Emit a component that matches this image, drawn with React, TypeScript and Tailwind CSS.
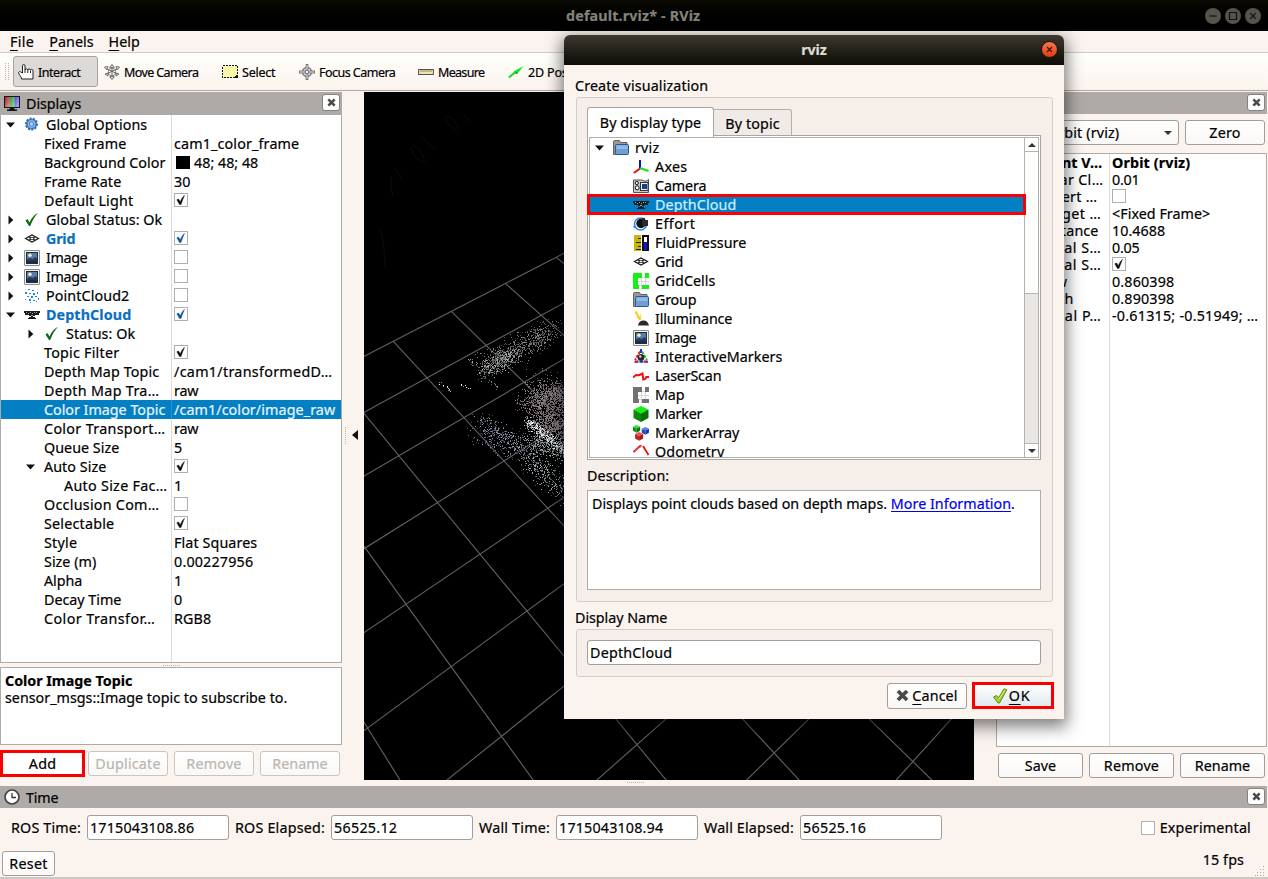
import React, { useLayoutEffect, useRef } from "react";

/* ---------- text ---------- */

type TextProps = { t: string; w?: number; c?: string; hot?: boolean };

// Tracks a label so that its ink fills roughly `w` pixels.
function T({ t, w, c = "", hot }: TextProps) {
  const ref = useRef<HTMLSpanElement>(null);
  useLayoutEffect(() => {
    const el = ref.current;
    if (!el || !w) return;
    el.style.letterSpacing = "0px";
    const natural = el.getBoundingClientRect().width;
    el.style.letterSpacing = (w - 0.7 - natural) / t.length + "px";
  }, [t, w]);
  return (
    <span ref={ref} className={"inline-block shrink-0 whitespace-pre " + c}>
      {hot ? <span className="underline decoration-1 underline-offset-[3px]">{t[0]}</span> : t[0]}
      {t.slice(1)}
    </span>
  );
}

/* ---------- icons ---------- */

const Svg = ({ children, crisp, c = "" }: { children: React.ReactNode; crisp?: boolean; c?: string }) => (
  <svg width="16" height="16" viewBox="0 0 16 16" className={"shrink-0 " + c} shapeRendering={crisp ? "crispEdges" : "auto"}>
    {children}
  </svg>
);

const GridIcon = () => (
  <Svg>
    <path d="M1.500 7.500 8 4l6.500 3.500L8 11Z M4.700 5.700l6.600 3.600M11.300 5.700 4.700 9.300" fill="none" stroke="#1a1a1a" strokeWidth="1.200" />
    <path d="M8 6.200 10.300 7.500 8 8.800 5.700 7.500Z" fill="#fff" stroke="#222" strokeWidth=".7" />
  </Svg>
);

const DepthIcon = () => (
  <Svg crisp>
    <path d="M0 4h16v2h-1v2h-4v1H9v1h2v1h1v1H4v-1h1v-1h2V9H5V8H1V6H0Z" fill="#1b1b1b" />
    <path d="M2 5h1v1H2zM4 6h1v1H4zM6 5h1v1H6zM8 6h1v1H8zM10 5h1v1h-1zM12 5h1v1h-1zM7 8h2v1H7z" fill="#a5a5a5" />
  </Svg>
);

const ImageIcon = () => (
  <Svg>
    <rect x=".5" y=".5" width="15" height="15" rx=".5" fill="#f4f4f4" stroke="#8c8c86" />
    <rect x="2" y="2" width="12" height="12" fill="#1d2b45" />
    <rect x="3" y="3" width="10" height="6.500" fill="#5b7da5" />
    <circle cx="6" cy="5.300" r="1.700" fill="#f6f1c4" />
    <path d="M3 9.500l3-1.500 3 1 2-2 2 1.500V11H3Z" fill="#26395c" />
  </Svg>
);

const FolderIcon = () => (
  <Svg>
    <path d="M.5 2q0-1.500 1.500-1.500h4.500l1 2h6.500v12H.5Z" fill="#9a9a96" stroke="#62625f" />
    <rect x="2.500" y="4.500" width="13" height="10" rx="1" fill="#6f9fd4" stroke="#2b568f" />
    <rect x="3.500" y="5.500" width="11" height="3.500" fill="#94bbe4" />
  </Svg>
);

const GearIcon = () => (
  <Svg>
    <circle cx="7.500" cy="7" r="5.600" fill="#4f8fd0" stroke="#2d69ad" strokeWidth="1.800" strokeDasharray="2 1.400" />
    <circle cx="7.500" cy="7" r="4.400" fill="#8dbbea" stroke="#2f6fb5" strokeWidth=".8" />
    <circle cx="7.500" cy="7" r="2.200" fill="#b7d5f3" stroke="#2f6fb5" strokeWidth=".8" />
  </Svg>
);

const OkIcon = () => (
  <Svg>
    <path d="M1.500 8.500 3.500 7l2 3.500C7.500 6 10 3 14 .8 10.500 5 8.300 8.500 6.200 14H5Z" fill="#0f6a17" />
  </Svg>
);

const PointsIcon = () => (
  <Svg crisp>
    <path
      d="M4 1h2v1H4zM8 2h2v1H8zM1 4h2v2H1zM5 5h2v1H5zM9 5h2v2H9zM13 4h1v2h-1zM3 8h2v1H3zM7 8h2v2H7zM11 8h2v1h-2zM14 10h1v2h-1zM1 11h1v1H1zM5 11h2v2H5zM9 12h2v1H9zM6 14h1v1H6zM12 13h1v1h-1z"
      fill="#1f86f0"
    />
  </Svg>
);

const AxesIcon = () => (
  <Svg>
    <path d="M7 9.500V1" stroke="#0a0adf" strokeWidth="2" />
    <path d="M7 9.500 .8 14" stroke="#e01010" strokeWidth="2" />
    <path d="M7 9l8.500 3" stroke="#10e020" strokeWidth="2" />
  </Svg>
);

const CameraIcon = () => (
  <Svg>
    <path d="M.5 2h9l1.500 1h3l1-1.500h.5V14.500H.5Z" fill="#c9c9c5" stroke="#55554f" />
    <rect x="7.500" y="4.500" width="7.500" height="8" fill="#eee" stroke="#333" />
    <rect x="9" y="6" width="5" height="5" fill="#16408d" />
    <circle cx="3.800" cy="5" r="1.600" fill="#fff" stroke="#111" />
    <circle cx="4.200" cy="9.800" r="2" fill="#fff" stroke="#111" />
  </Svg>
);

const EffortIcon = () => (
  <Svg>
    <circle cx="7.500" cy="8" r="6" fill="none" stroke="#2b8be0" strokeWidth="1.600" />
    <circle cx="8" cy="7.500" r="4.700" fill="#111" />
    <path d="M9 2h3v2h3v6h-4l-2-1Z" fill="#2a2a2a" />
    <path d="M0 10l3 .5-2 2Z" fill="#2b8be0" />
  </Svg>
);

const FluidIcon = () => (
  <Svg crisp>
    <rect x="1" y="0" width="7" height="16" fill="#c7b800" />
    <path d="M5 3h3v1H5zM3 7h5v1H3zM5 11h3v1H5zM3 14h5v1H3z" fill="#222" />
    <rect x="9" y="0" width="7" height="16" fill="#111" />
    <path d="M11 3h3v12h-3z" fill="#1414d8" />
    <path d="M11 2h3v5h-3z" fill="#fff" />
  </Svg>
);

const Cells = ({ on }: { on: string }) => (
  <Svg crisp>
    <path d="M4 0h1v16H4zM8 0h1v16H8zM12 0h1v16h-1zM0 4h16v1H0zM0 8h16v1H0zM0 12h16v1H0z" fill="#d8d8d8" />
    <path d="M0 0h9v5H5v7h1v4H0ZM12 0h4v5h-4ZM9 12h7v4H9Z" fill={on} />
  </Svg>
);

const IllumIcon = () => (
  <Svg>
    <path d="M2.500.5 7.500 9" stroke="#f0cf10" strokeWidth="2" />
    <path d="M3 6l3 2M8 3l-.5 4" stroke="#f0cf10" strokeWidth=".7" />
    <path d="M5 14.500c.5-3.500 2.500-5 5.500-5s4.500 1.500 5.500 5Z" fill="#2b2b2b" />
  </Svg>
);

const InteractiveIcon = () => (
  <Svg>
    <path d="M7 2.500 2 11" stroke="#e32020" strokeWidth="2" strokeDasharray="3 1" />
    <path d="M9 2.500 14 11" stroke="#20c030" strokeWidth="2" strokeDasharray="3 1" />
    <path d="M1.500 12.800h13.500" stroke="#2030e8" strokeWidth="2" strokeDasharray="4 1" />
    <path d="M8 0v4" stroke="#2030e8" strokeWidth="2" />
    <path d="M2 12.500h3M11 12.500h3" stroke="#e32020" strokeWidth="2" />
    <circle cx="8" cy="8.500" r="3.400" fill="#2a2a2a" />
    <circle cx="7.300" cy="7.500" r="1.200" fill="#d5d5d5" />
  </Svg>
);

const LaserIcon = () => (
  <Svg>
    <path d="M0 9.500 3 7l3 .2L9.500 5.500l.8 6 2-.5 1-2H16" fill="none" stroke="#f01010" strokeWidth="2" />
  </Svg>
);

const cube = (x: number, y: number, s: number, a: string, b: string, d: string) => (
  <g transform={`translate(${x} ${y}) scale(${s})`}>
    <path d="M8 0l7.500 3.500L8 7.500.5 3.500Z" fill={a} />
    <path d="M.5 3.500 8 7.500V16L.5 12Z" fill={b} />
    <path d="M15.500 3.500 8 7.500V16l7.500-4Z" fill={d} />
  </g>
);

const MarkerIcon = () => <Svg>{cube(0, 0, 1, "#15f015", "#0a8a0a", "#067006")}</Svg>;
const MarkerArrayIcon = () => (
  <Svg>
    {cube(-0.3, 0, 0.48, "#30e030", "#129012", "#0c780c")}
    {cube(8.5, 2, 0.48, "#5580ee", "#2448c4", "#1838a0")}
    {cube(1.8, 7, 0.54, "#ee5050", "#c02424", "#a01a1a")}
  </Svg>
);

const OdomIcon = () => (
  <Svg>
    <path d="M.5 8 7 2l1.500-.5M10 2l5.500 9" fill="none" stroke="#e51515" strokeWidth="1.800" />
    <path d="M2 7l6-4" stroke="#f09090" strokeWidth=".8" />
  </Svg>
);

const MonitorIcon = () => (
  <Svg>
    <defs>
      <linearGradient id="scrR" x1="0" y1="0" x2="1" y2="1">
        <stop offset="0" stopColor="#a02a2a" />
        <stop offset="1" stopColor="#e0a0a0" />
      </linearGradient>
      <linearGradient id="scrG" x1="0" y1="0" x2="1" y2="1">
        <stop offset="0" stopColor="#2c9a40" />
        <stop offset="1" stopColor="#a0e0a0" />
      </linearGradient>
      <linearGradient id="scrB" x1="0" y1="0" x2="1" y2="1">
        <stop offset="0" stopColor="#5050d8" />
        <stop offset="1" stopColor="#b8b8fa" />
      </linearGradient>
    </defs>
    <rect x="1" y="1" width="5" height="10" fill="url(#scrR)" />
    <rect x="6" y="1" width="4.500" height="10" fill="url(#scrG)" />
    <rect x="10.500" y="1" width="5" height="10" fill="url(#scrB)" />
    <rect x=".5" y=".5" width="15" height="11" fill="none" stroke="#161616" />
    <path d="M6 12h4l1 1.500h2V15H3v-1.500h2Z" fill="#161616" />
  </Svg>
);

const ClockIcon = () => (
  <Svg>
    <circle cx="8" cy="8" r="7" fill="#fff" stroke="#444" strokeWidth="1.700" />
    <path d="M8 4v4.500h4" fill="none" stroke="#333" strokeWidth="1.300" />
  </Svg>
);

const HandIcon = () => (
  <Svg>
    <path
      d="M4.500 9V1.800q0-1.300 1.200-1.300T7 1.800V6q.3-1.200 1.400-1.200T9.800 6q.2-1 1.300-1t1.300 1.200q.2-.8 1.300-.8t1.300 1.200V15H3.500q0-2-1.500-3.500Q.5 10 .6 8.500 1.300 6.800 2.700 8Z"
      fill="#fff"
      stroke="#222"
    />
    <path d="M7 6v3M9.800 6v3M12.500 6.500V9" stroke="#222" strokeWidth="1" />
  </Svg>
);

const MoveIcon = () => (
  <Svg>
    <circle cx="8" cy="8" r="3.800" fill="none" stroke="#888" />
    <path d="M8 3v10M2.500 4.500 13.500 10M13.500 4.500 2.500 10" stroke="#666" strokeWidth="1" />
    <path d="M8 .4l2.300 3H5.700ZM8 15.600l2.300-3H5.700ZM.5 3l3.500-.5L2.800 6ZM15.500 3 12 2.500 13.200 6Z" fill="#e2e2e2" stroke="#555" strokeWidth=".8" />
    <path d="M1 10l3-1v3ZM15 10l-3-1v3Z" fill="#ddd" stroke="#555" strokeWidth=".8" />
  </Svg>
);

const FocusIcon = () => (
  <Svg>
    <circle cx="8" cy="8" r="4.500" fill="none" stroke="#8c8c8c" strokeWidth="1.800" />
    <path d="M8 0v16M0 8h16" stroke="#777" strokeWidth="2.800" />
    <path d="M8 1v14M1 8h14" stroke="#e6e6e6" strokeWidth="1" />
    <circle cx="8" cy="8" r="1.800" fill="#eee" stroke="#777" />
  </Svg>
);

const SelectIcon = () => (
  <Svg crisp>
    <rect x=".5" y="1.500" width="15" height="12" fill="#fbf7a8" stroke="#111" strokeDasharray="2 1" />
    <path d="M15 10v4h-4Z" fill="#111" />
  </Svg>
);

const RulerIcon = () => (
  <Svg>
    <rect x=".6" y="5.500" width="14.800" height="5" fill="#efe5a5" stroke="#555" />
    <path d="M3 6v2M5 6v2M7 6v2M9 6v2M11 6v2M13 6v2" stroke="#777" strokeWidth=".8" />
  </Svg>
);

const ArrowIcon = () => (
  <Svg>
    <path d="M.8 13.500 7 8.500" stroke="#14e02c" strokeWidth="2.200" />
    <path d="M15.500 2 5.500 7.500l3.500 2.700Z" fill="#12e428" />
    <path d="M6 9l2.500.8L9.500 8Z" fill="#0a8a18" />
  </Svg>
);

const Cross = ({ s = 9, c = "#4a4a48" }: { s?: number; c?: string }) => (
  <svg width={s} height={s} viewBox="0 0 8 8" className="shrink-0">
    <path d="M1.200 1.200 6.800 6.800M6.800 1.200 1.200 6.800" stroke={c} strokeWidth="2.300" />
  </svg>
);

const ApplyIcon = () => (
  <Svg>
    <path d="M1.500 9 4.500 7.500 6.500 10 12 .8l2.800 1L7.500 15H6Z" fill="#a4cf2c" stroke="#5f8d0e" strokeWidth="1" />
    <path d="M7 11 12.800 2" stroke="#d6ee80" strokeWidth="1" />
  </Svg>
);

/* ---------- small controls ---------- */

const Check = ({ on, blue, c = "" }: { on?: boolean; blue?: boolean; c?: string }) => (
  <span className={"flex h-[14px] w-[14px] shrink-0 items-center justify-center border border-[#b0adaa] bg-white " + c}>
    {on && (
      <svg width="10" height="10" viewBox="0 0 10 10">
        <path d="M.8 4.800 2.600 4l1.600 2.700Q5.500 3 8.500.3 6.800 4.500 5 9.500H3.500Z" fill={blue ? "#0c539c" : "#0a0a0a"} stroke={blue ? "#0c539c" : "#0a0a0a"} strokeWidth=".4" />
      </svg>
    )}
  </span>
);

const Tri = ({ open }: { open?: boolean }) => (
  <svg width="9" height="10" viewBox="0 0 9 10" className="shrink-0">
    <path d={open ? "M0 2.500h9L4.500 7.500Z" : "M2.500 .5v9L7.300 5Z"} fill="#111" />
  </svg>
);

const Btn = ({ children, c = "", off }: { children: React.ReactNode; c?: string; off?: boolean }) => (
  <button
    className={
      "flex shrink-0 items-center justify-center rounded-[3px] border bg-linear-to-b from-white to-[#faf8f6] " +
      (off ? "border-[#c9c5c1] text-[#b9b6b3] " : "border-[#a19d99] text-black ") +
      c
    }
  >
    {children}
  </button>
);

const DockHeader = ({ icon, title, w, c = "" }: { icon?: React.ReactNode; title?: string; w?: number; c?: string }) => (
  <div className={"flex shrink-0 items-center bg-[#aeaaa7] pr-[2px] pl-1 " + c}>
    {icon}
    {title && <T t={title} w={w} c="ml-[6px]" />}
    <span className="mb-[2px] ml-auto flex h-[17px] w-[18px] items-center justify-center rounded-[3px] border border-[#85817e] bg-white">
      <Cross />
    </span>
  </div>
);

const Field = ({ t, w, c = "" }: { t: string; w: number; c?: string }) => (
  <div className={"flex h-[25px] shrink-0 items-center rounded-[3px] border border-[#a19d99] bg-white " + c}>
    <T t={t} w={w} />
  </div>
);

/* ---------- displays tree ---------- */

type Row = { l: string; w: number; d: number; a?: "o" | "c"; i?: React.ReactNode; v?: string; vw?: number; k?: "on" | "off" | "blue"; b?: boolean; sel?: boolean; sw?: boolean };

const rows: Row[] = [
  { l: "Global Options", w: 102, d: 0, a: "o", i: <GearIcon /> },
  { l: "Fixed Frame", w: 83, d: 0, v: "cam1_color_frame", vw: 126 },
  { l: "Background Color", w: 122, d: 0, v: "48; 48; 48", vw: 65, sw: true },
  { l: "Frame Rate", w: 78, d: 0, v: "30", vw: 17 },
  { l: "Default Light", w: 90, d: 0, k: "on" },
  { l: "Global Status: Ok", w: 117, d: 0, a: "c", i: <OkIcon /> },
  { l: "Grid", w: 30, d: 0, a: "c", i: <GridIcon />, k: "blue", b: true },
  { l: "Image", w: 42, d: 0, a: "c", i: <ImageIcon />, k: "off" },
  { l: "Image", w: 42, d: 0, a: "c", i: <ImageIcon />, k: "off" },
  { l: "PointCloud2", w: 84, d: 0, a: "c", i: <PointsIcon />, k: "off" },
  { l: "DepthCloud", w: 86, d: 0, a: "o", i: <DepthIcon />, k: "blue", b: true },
  { l: "Status: Ok", w: 70, d: 1, a: "c", i: <OkIcon /> },
  { l: "Topic Filter", w: 76, d: 0, k: "on" },
  { l: "Depth Map Topic", w: 116, d: 0, v: "/cam1/transformedD…", vw: 159 },
  { l: "Depth Map Tra…", w: 116, d: 0, v: "raw", vw: 25 },
  { l: "Color Image Topic", w: 122, d: 0, v: "/cam1/color/image_raw", vw: 162, sel: true },
  { l: "Color Transport…", w: 122, d: 0, v: "raw", vw: 25 },
  { l: "Queue Size", w: 76, d: 0, v: "5", vw: 9 },
  { l: "Auto Size", w: 63, d: 1, a: "o", k: "on" },
  { l: "Auto Size Fac…", w: 104, d: 1, v: "1", vw: 9 },
  { l: "Occlusion Com…", w: 116, d: 0, k: "off" },
  { l: "Selectable", w: 71, d: 0, k: "on" },
  { l: "Style", w: 34, d: 0, v: "Flat Squares", vw: 84 },
  { l: "Size (m)", w: 53, d: 0, v: "0.00227956", vw: 80 },
  { l: "Alpha", w: 39, d: 0, v: "1", vw: 9 },
  { l: "Decay Time", w: 78, d: 0, v: "0", vw: 9 },
  { l: "Color Transfor…", w: 112, d: 0, v: "RGB8", vw: 38 },
];

const TreeRow = ({ r }: { r: Row }) => (
  <div className={"flex h-[19px] shrink-0 items-center " + (r.sel ? "bg-[#0380c4] text-[#e9f4fb]" : "")}>
    <div className={"flex h-full w-[171px] shrink-0 items-center overflow-hidden border-r " + (r.sel ? "border-[#2b93cd]" : "border-[#dedcda]")}>
      <span className={"flex shrink-0 items-center " + (r.d ? "pl-[25px]" : "pl-[5px]")}>
        {r.a ? <Tri open={r.a === "o"} /> : <span className="w-[9px]" />}
      </span>
      {r.i ? <span className="mr-[6px] ml-[9px] flex">{r.i}</span> : <span className={r.a ? "w-[9px]" : "w-[29px]"} />}
      <T t={r.l} w={r.w} c={r.b ? "font-bold text-[#0a6fc2]" : ""} />
    </div>
    <div className="flex items-center pl-[2px]">
      {r.sw && <span className="mr-1 ml-[2px] h-[13px] w-[14px] bg-black" />}
      {r.v && <T t={r.v} w={r.vw} />}
      {r.k && <Check on={r.k !== "off"} blue={r.k === "blue"} c="mb-[2px]" />}
    </div>
  </div>
);

/* ---------- view properties ---------- */

const views: { l: string; w: number; v?: string; vw?: number; k?: "on" | "off"; b?: boolean }[] = [
  { l: "Current V…", w: 81, v: "Orbit (rviz)", vw: 79, b: true },
  { l: "Near Cl…", w: 64, v: "0.01", vw: 28 },
  { l: "Invert …", w: 58, k: "off" },
  { l: "Target …", w: 62, v: "<Fixed Frame>", vw: 99 },
  { l: "Distance", w: 59, v: "10.4688", vw: 54 },
  { l: "Focal S…", w: 62, v: "0.05", vw: 28 },
  { l: "Focal S…", w: 62, k: "on" },
  { l: "Yaw", w: 28, v: "0.860398", vw: 63 },
  { l: "Pitch", w: 34, v: "0.890398", vw: 63 },
  { l: "Focal P…", w: 62, v: "-0.61315; -0.51949; …", vw: 147 },
];

/* ---------- 3D viewport ---------- */

const node = (i: number, j: number) => {
  const w = 1 + 0.037 * i - 0.0412 * j;
  return [(331 + 76.85 * i + 17.47 * j) / w - 364, (373.4 - 19.5 * i + 22.35 * j) / w - 92];
};

const gridPath = (() => {
  let d = "";
  const seg = (a: number[], b: number[]) => (d += `M${a[0].toFixed(1)} ${a[1].toFixed(1)}L${b[0].toFixed(1)} ${b[1].toFixed(1)}`);
  for (let j = 0; j <= 10; j++) seg(node(-5, j), node(5, j));
  for (let i = -5; i <= 5; i++) seg(node(i, 0), node(i, 10));
  return d;
})();

// [x1, y1, x2, y2, spread, count, palette index]
const clusters: number[][] = [
  [118, 274, 190, 238, 8, 760, 0],
  [118, 281, 150, 262, 6, 300, 2],
  [178, 300, 205, 325, 15, 1100, 1],
  [158, 312, 200, 300, 7, 420, 1],
  [175, 325, 205, 345, 9, 600, 1],
  [163, 328, 200, 360, 4, 260, 2],
  [164, 329, 202, 360, 3, 300, 3],
  [118, 328, 142, 345, 5, 150, 4],
  [112, 337, 170, 365, 9, 260, 4],
  [140, 348, 190, 355, 8, 240, 2],
  [164, 365, 200, 400, 8, 330, 2],
  [170, 350, 200, 365, 5, 160, 2],
  [74, 289, 88, 300, 1, 12, 3],
  [91, 290, 107, 297, 1, 10, 3],
  [104, 267, 110, 274, 2, 12, 2],
  [123, 288, 135, 296, 2, 12, 0],
];
const shades = [
  ["#4b4848", "#6b6767", "#898484"],
  ["#51494c", "#6f666a", "#8c8286"],
  ["#4c5152", "#70777a", "#a0a8ab"],
  ["#8d9094", "#c4c7ca", "#f2f4f5"],
  ["#3b3c4b", "#5f6076", "#8c8ca2"],
];

const cloud = (() => {
  let s = 20241;
  const rnd = () => ((s = (s * 1664525 + 1013904223) % 4294967296), s / 4294967296);
  const out: Record<string, string> = {};
  for (const [x1, y1, x2, y2, sp, n, p] of clusters) {
    for (let k = 0; k < n; k++) {
      const t = rnd();
      const gx = (rnd() + rnd() + rnd() - 1.5) * 1.5 * sp;
      const gy = (rnd() + rnd() + rnd() - 1.5) * 1.5 * sp;
      const c = shades[p][Math.floor(rnd() * 3)];
      out[c] = (out[c] || "") + `M${Math.round(x1 + (x2 - x1) * t + gx)} ${Math.round(y1 + (y2 - y1) * t + gy)}h1v1h-1z`;
    }
  }
  return out;
})();

const Viewport = () => (
  <svg width="610" height="688" viewBox="0 0 610 688" className="mt-[1px] block shrink-0 bg-black">
    <path d={gridPath} fill="none" stroke="#626262" strokeWidth="1.100" />
    <g shapeRendering="crispEdges">
      {Object.entries(cloud).map(([c, d]) => (
        <path key={c} d={d} fill={c} />
      ))}
    </g>
    <g fill="none" stroke="#0d0d0d">
      <path d="M81 24q8-1 13 12M81 26q4 10 13 13M47 55q2 14 15 15M48 53q9 2 12 14M58 45l14 13M100 22l6 8M31 76l7 11M27 84q-1 10 2 20M16 137q5 14 5 40" />
    </g>
  </svg>
);

/* ---------- dialog ---------- */

const types: [string, number, React.ReactNode][] = [
  ["Axes", 33, <AxesIcon />],
  ["Camera", 52, <CameraIcon />],
  ["DepthCloud", 82, <DepthIcon />],
  ["Effort", 41, <EffortIcon />],
  ["FluidPressure", 92, <FluidIcon />],
  ["Grid", 29, <GridIcon />],
  ["GridCells", 61, <Cells on="#16f016" />],
  ["Group", 42, <FolderIcon />],
  ["Illuminance", 78, <IllumIcon />],
  ["Image", 42, <ImageIcon />],
  ["InteractiveMarkers", 128, <InteractiveIcon />],
  ["LaserScan", 67, <LaserIcon />],
  ["Map", 30, <Cells on="#727272" />],
  ["Marker", 48, <MarkerIcon />],
  ["MarkerArray", 85, <MarkerArrayIcon />],
  ["Odometry", 70, <OdomIcon />],
];

const ScrollArrow = ({ up }: { up?: boolean }) => (
  <span className={"flex h-[14px] shrink-0 items-center justify-center border-[#b5b2af] bg-white " + (up ? "border-b" : "border-t")}>
    <svg width="8" height="4" viewBox="0 0 8 4">
      <path d={up ? "M0 4h8L4 0Z" : "M0 0h8L4 4Z"} fill="#333" />
    </svg>
  </span>
);

const Dialog = () => (
  <div className="absolute top-[35px] left-[564px] flex h-[684px] w-[500px] flex-col rounded-t-[6px] bg-[#fbf3ee] shadow-[0_5px_16px_3px_rgba(0,0,0,0.5)]">
    <div className="relative flex h-[30px] shrink-0 items-center justify-center rounded-t-[6px] bg-linear-to-b from-[#3c3a30] to-[#0d0c06] text-[#dfdbd2]">
      <T t="rviz" w={26} c="mb-px font-bold" />
      <span className="absolute top-[6px] right-[6px] flex h-[17px] w-[17px] items-center justify-center rounded-full border border-[#1a1208] bg-linear-to-b from-[#f7744f] to-[#e0380c]">
        <svg width="7" height="7" viewBox="0 0 7 7">
          <path d="M1 1l5 5M6 1 1 6" stroke="#3a1206" strokeWidth="1.200" />
        </svg>
      </span>
    </div>
    <div className="flex h-[32px] shrink-0 items-end pl-[11px]">
      <T t="Create visualization" w={134} c="mb-[2px]" />
    </div>
    <div className="mx-[12px] mr-[11px] flex h-[505px] shrink-0 flex-col rounded-[3px] border border-[#d2cdc9] bg-[#f5eee9] px-[10px] pt-[10px] pr-[11px]">
      <div className="flex h-[27px] items-end">
        <div className="z-10 -mb-[2px] flex h-[30px] w-[127px] items-center justify-center rounded-t-[3px] border border-b-0 border-[#a9a6a2] bg-white">
          <T t="By display type" w={102} />
        </div>
        <div className="flex h-[26px] w-[78px] items-center justify-center rounded-tr-[3px] border border-b-0 border-l-0 border-[#b3afab] bg-[#f1ebe7]">
          <T t="By topic" w={55} c="mt-[1px]" />
        </div>
      </div>
      <div className="relative flex h-[325px] w-[454px] shrink-0 border border-[#a9a6a2] bg-white p-[1px]">
        <div className="flex min-w-0 flex-1 overflow-hidden border border-[#b3b0ac]">
          <div className="flex min-w-0 flex-1 flex-col">
            <div className="flex h-[19px] shrink-0 items-center pl-[5px]">
              <Tri open />
              <span className="ml-[9px] flex">
                <FolderIcon />
              </span>
              <T t="rviz" w={25} c="ml-[6px]" />
            </div>
            {types.map(([name, w, icon]) => (
              <div key={name} className={"flex h-[19px] shrink-0 items-center pl-[43px] " + (name === "DepthCloud" ? "bg-[#0380c4] text-[#d5ecfa]" : "")}>
                {icon}
                <T t={name} w={w} c="ml-[6px]" />
              </div>
            ))}
          </div>
          <div className="flex w-[14px] shrink-0 flex-col border-l border-[#b5b2af] bg-[#e9e6e3]">
            <ScrollArrow up />
            <span className="h-[142px] border-b border-[#b5b2af] bg-[#fdfdfc]" />
            <span className="mt-auto block">
              <ScrollArrow />
            </span>
          </div>
        </div>
        <span className="absolute top-[58px] left-[-1px] h-[21px] w-[439px] border-3 border-[#fb0000]" />
      </div>
      <div className="flex h-[30px] shrink-0 items-center">
        <T t="Description:" w={83} />
      </div>
      <div className="flex h-[100px] w-[454px] shrink-0 items-start border border-[#b0ada9] bg-white pt-[3px] pl-[4px]">
        <T t="Displays point clouds based on depth maps. " w={299.500} />
        <span className="h-[18px] border-b border-[#0000ff] text-[#0000f0]">
          <T t="More Information" w={121} />
        </span>
        <T t="." />
      </div>
    </div>
    <div className="flex h-[27px] shrink-0 items-center pt-[4px] pl-[11px]">
      <T t="Display Name" w={93} />
    </div>
    <div className="mr-[11px] ml-[12px] flex h-[48px] shrink-0 items-start rounded-[3px] border border-[#d2cdc9] bg-[#f5eee9] pt-[10px] pl-[10px]">
      <Field t="DepthCloud" w={83} c="w-[454px] pl-[2px]" />
    </div>
    <div className="mt-[5px] mr-[10px] flex items-center justify-end gap-[5px]">
      <Btn c="h-[26px] w-[80px] gap-[3px]">
        <Cross s={13} />
        <T t="Cancel" w={46} hot />
      </Btn>
      <button className="flex h-[27px] w-[82px] items-center justify-center gap-[1px] border-3 border-[#fb0000] bg-linear-to-b from-white to-[#dfe9ee] pr-[4px]">
        <ApplyIcon />
        <T t="OK" w={22} hot />
      </button>
    </div>
  </div>
);

/* ---------- window ---------- */

const tools: [string, number, string, React.ReactNode][] = [
  ["Move Camera", 75, "w-[118px]", <MoveIcon />],
  ["Select", 34, "w-[77px]", <SelectIcon />],
  ["Focus Camera", 77, "w-[119px]", <FocusIcon />],
  ["Measure", 47, "w-[90px]", <RulerIcon />],
  ["2D Pose Estimate", 100, "w-[130px]", <ArrowIcon />],
];

const WinBtn = ({ d }: { d: string }) => (
  <span className="flex h-4 w-4 items-center justify-center rounded-full bg-[#55534a]">
    <svg width="10" height="10" viewBox="0 0 10 10">
      <path d={d} fill="none" stroke="#12110d" strokeWidth="1.200" />
    </svg>
  </span>
);

const Dots = ({ c }: { c: string }) => <span className={"block border-[#b9b3ae] " + c} />;

export default function App() {
  return (
    <div className="relative flex h-[879px] w-[1268px] flex-col overflow-hidden bg-[#fbf3ee] font-['Noto_Sans','Open_Sans',sans-serif] text-[14.3px] leading-[19px] text-black [-webkit-text-stroke:0.2px]">
      <div className="flex h-[31px] shrink-0 items-center bg-linear-to-b from-[#0c0b04] to-black pl-[566px] text-[#85827a]">
        <T t="default.rviz* - RViz" w={135} c="font-bold" />
        <div className="ml-auto flex gap-1 pr-[7px]">
          <WinBtn d="M1.500 5h7" />
          <WinBtn d="M1.500 1.500h7v7h-7Z" />
          <WinBtn d="M2.200 2.200l5.600 5.600M7.800 2.200 2.200 7.800" />
        </div>
      </div>

      <div className="flex h-[22px] shrink-0 items-center gap-[15px] border-b border-[#d0cbc8] pl-[10px]">
        <T t="File" w={25} hot />
        <T t="Panels" w={45} hot />
        <T t="Help" w={32} hot />
      </div>

      <div className="flex h-[38px] shrink-0 items-center border-b border-[#aca8a5] bg-linear-to-b from-[#fffffb] to-[#fbf3ee] text-[12.5px]">
        <span className="ml-[5px] flex w-[8px] gap-[2px]">
          <Dots c="h-[17px] border-l border-dotted" />
          <Dots c="h-[17px] border-l border-dotted" />
        </span>
        <div className="flex h-[31px] w-[85px] items-center gap-1 rounded-[3px] border border-[#a6a29f] bg-[#dcd9d6] pl-1">
          <HandIcon />
          <T t="Interact" w={43} c="mt-px" />
        </div>
        {tools.map(([t, w, c, icon]) => (
          <div key={t} className={"flex shrink-0 items-center gap-1 pl-[6px] " + c}>
            {icon}
            <T t={t} w={w} c="mt-px" />
          </div>
        ))}
      </div>

      <div className="flex h-[695px] shrink-0">
        <div className="flex w-[342px] shrink-0 flex-col pt-[1px]">
          <DockHeader icon={<MonitorIcon />} title="Displays" w={56} c="h-[23px]" />
          <div className="flex h-[548px] shrink-0 flex-col border border-t-0 border-[#aeaaa7] bg-white">
            {rows.map((r, k) => (
              <TreeRow key={k} r={r} />
            ))}
            <div className="w-[171px] flex-1 border-r border-[#dedcda]" />
          </div>
          <div className="flex h-[4px] items-center justify-center">
            <Dots c="w-[17px] border-t border-dotted" />
          </div>
          <div className="flex h-[78px] shrink-0 flex-col border border-[#aeaaa7] bg-white pt-[4px] pl-[4px] leading-[17px]">
            <T t="Color Image Topic" w={128} c="self-start font-bold" />
            <T t="sensor_msgs::Image topic to subscribe to." w={283} c="self-start" />
          </div>
          <div className="mt-[5px] flex items-center">
            <button className="flex h-[27px] w-[85px] items-center justify-center border-3 border-[#fb0000] bg-white">
              <T t="Add" w={28} />
            </button>
            <Btn off c="ml-[3px] h-[25px] w-[80px]">
              <T t="Duplicate" w={66} />
            </Btn>
            <Btn off c="ml-[6px] h-[25px] w-[80px]">
              <T t="Remove" w={56} />
            </Btn>
            <Btn off c="ml-[6px] h-[25px] w-[80px]">
              <T t="Rename" w={56} />
            </Btn>
          </div>
        </div>

        <div className="flex w-[22px] shrink-0 items-center pb-[7px] pl-[3px]">
          <Dots c="h-[17px] border-l border-dotted" />
          <svg width="6" height="10" viewBox="0 0 6 10" className="ml-[6px]">
            <path d="M6 0v10L0 5Z" fill="#111" />
          </svg>
        </div>

        <div className="flex w-[610px] shrink-0 flex-col">
          <Viewport />
          <div className="flex h-[5px] items-center justify-center pr-[68px]">
            <Dots c="w-[17px] border-t border-dotted" />
          </div>
        </div>

        <div className="ml-[22px] flex w-[272px] shrink-0 flex-col pt-[1px]">
          <DockHeader c="h-[22px] mr-px" />
          <div className="mt-[6px] flex h-[25px]">
            <div className="ml-[2px] flex w-[181px] items-center justify-between rounded-[3px] border border-[#a19d99] bg-linear-to-b from-white to-[#faf8f6] pr-[6px] pl-[48px]">
              <T t="Orbit (rviz)" w={73} />
              <svg width="8" height="4" viewBox="0 0 8 4">
                <path d="M0 0h8L4 4Z" fill="#333" />
              </svg>
            </div>
            <Btn c="ml-[6px] w-[80px]">
              <T t="Zero" w={32} />
            </Btn>
          </div>
          <div className="mt-[8px] flex h-[594px] w-[271px] flex-col border border-[#aeaaa7] bg-white">
            {views.map((v, k) => (
              <div key={k} className={"flex h-[17px] shrink-0 items-center " + (v.b ? "font-bold" : "")}>
                <div className={"flex h-full w-[113px] shrink-0 items-center border-r border-[#dedcda] " + (v.b ? "pl-[25px]" : "pl-[43px]")}>
                  <T t={v.l} w={v.w} />
                </div>
                <div className="flex items-center pl-[2px]">
                  {v.v && <T t={v.v} w={v.vw} />}
                  {v.k && <Check on={v.k === "on"} c="mb-[2px]" />}
                </div>
              </div>
            ))}
            <div className="w-[113px] flex-1 border-r border-[#dedcda]" />
          </div>
          <div className="mt-[6px] flex gap-[6px] pl-[2px]">
            <Btn c="h-[25px] w-[85px]">
              <T t="Save" w={32} />
            </Btn>
            <Btn c="h-[25px] w-[85px]">
              <T t="Remove" w={56} />
            </Btn>
            <Btn c="h-[25px] w-[85px]">
              <T t="Rename" w={56} />
            </Btn>
          </div>
        </div>
      </div>

      <DockHeader icon={<ClockIcon />} title="Time" w={33} c="h-[22px] mr-px" />
      <div className="mt-[7px] flex h-[25px] shrink-0 items-center pl-[11px]">
        <T t="ROS Time:" w={70.700} />
        <Field t="1715043108.86" w={105} c="ml-[6px] w-[142px] pl-[2px]" />
        <T t="ROS Elapsed:" w={90.700} c="ml-[6px]" />
        <Field t="56525.12" w={64} c="ml-[6px] w-[142px] pl-[2px]" />
        <T t="Wall Time:" w={71.700} c="ml-[6px]" />
        <Field t="1715043108.94" w={105} c="ml-[6px] w-[142px] pl-[2px]" />
        <T t="Wall Elapsed:" w={90.700} c="ml-[6px]" />
        <Field t="56525.16" w={64} c="ml-[6px] w-[142px] pl-[2px]" />
        <span className="ml-auto flex items-center gap-[5px] pr-[17px]">
          <Check />
          <T t="Experimental" w={92} />
        </span>
      </div>
      <div className="mt-[10px] flex h-[26px] shrink-0 items-center justify-between pr-[24px] pl-[2px]">
        <Btn c="h-[25px] w-[53px]">
          <T t="Reset" w={39} />
        </Btn>
        <T t="15 fps" w={42} c="mb-[8px]" />
      </div>
      <div className="mt-auto h-[2px] shrink-0 bg-[#cdc8c4]" />
      <svg width="10" height="10" className="absolute right-[3px] bottom-[3px]">
        <path d="M8 0h1v1H8zM5 3h1v1H5zM8 3h1v1H8zM2 6h1v1H2zM5 6h1v1H5zM8 6h1v1H8zM0 9h1v1H0zM2 9h1v1H2zM5 9h1v1H5zM8 9h1v1H8z" fill="#aaa5a0" />
      </svg>

      <Dialog />
    </div>
  );
}
